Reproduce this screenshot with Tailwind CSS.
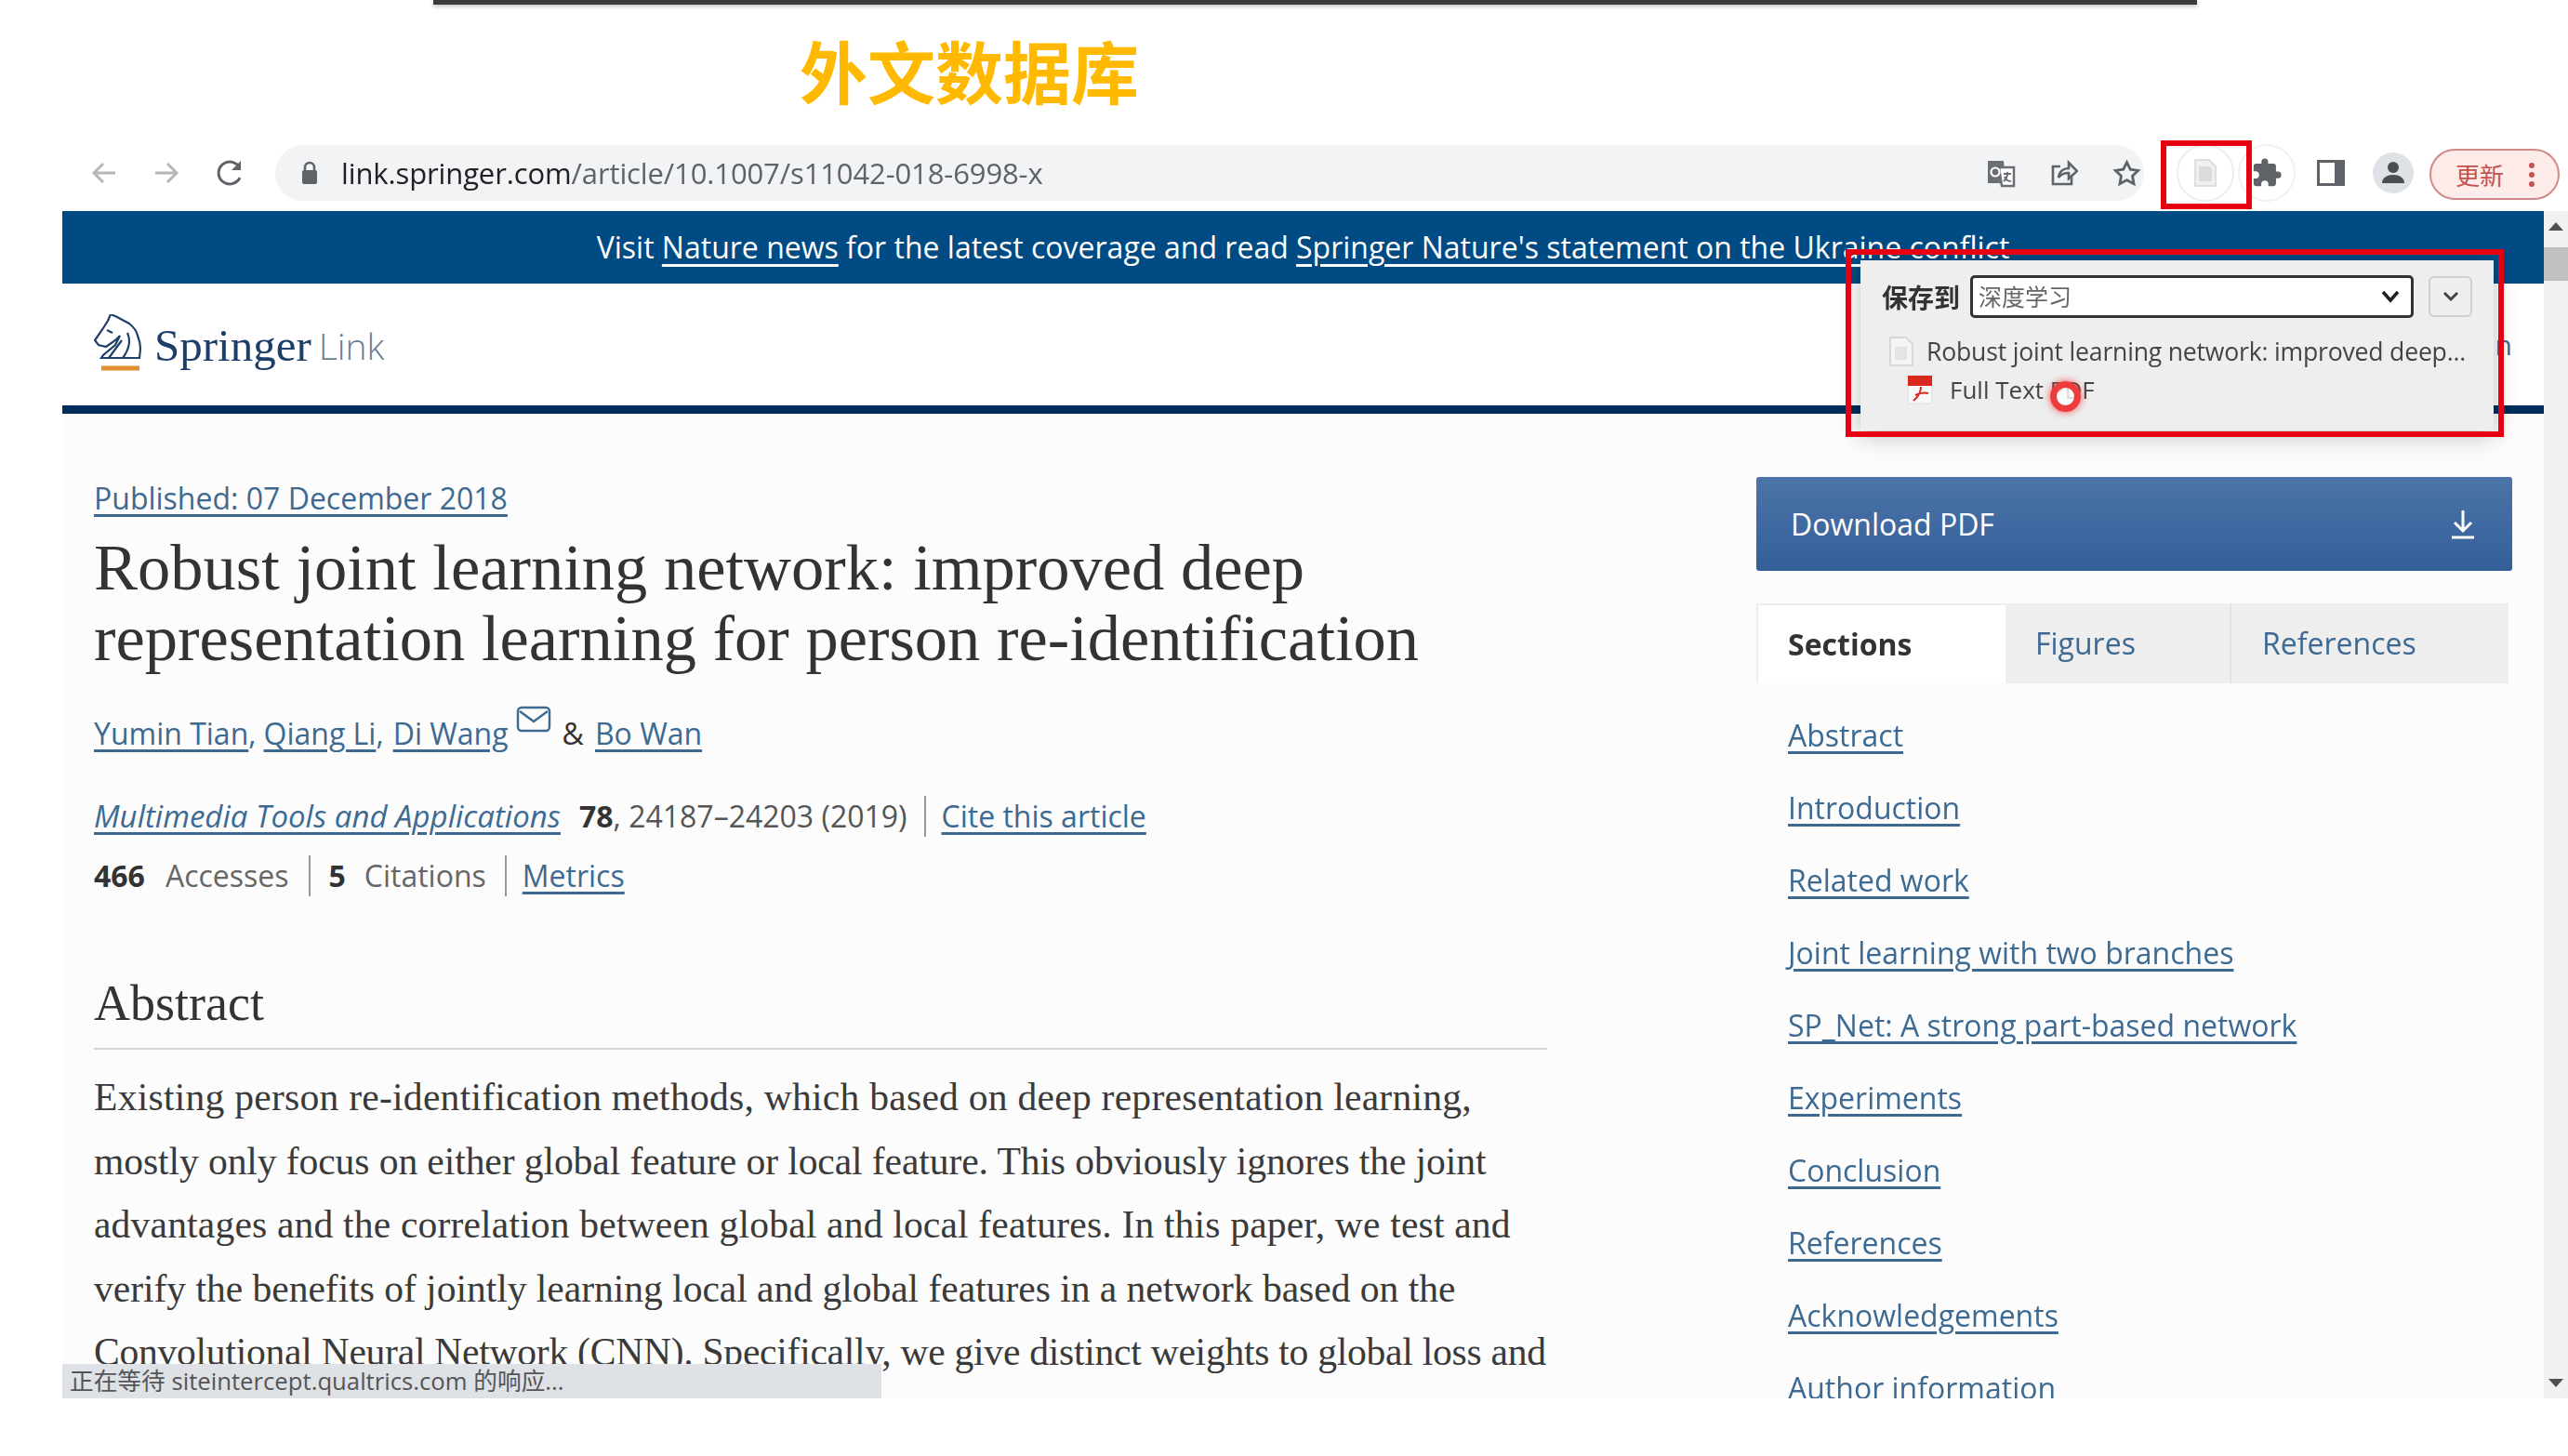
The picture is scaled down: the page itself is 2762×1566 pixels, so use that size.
<!DOCTYPE html>
<html lang="zh">
<head>
  <meta charset="UTF-8">
  <title>Robust joint learning network</title>
  <script src="https://cdn.jsdelivr.net/npm/@tailwindcss/browser@4"></script>
</head>
<body class="bg-white">
  <div class="relative w-[2762px] h-[1566px] overflow-hidden blur-[0.7px] font-['Open_Sans','Noto_Sans_CJK_SC',sans-serif] text-[#333]">
    <!-- video frame top edge -->
    <div class="ml-[466px] w-[1897px] h-[5px] bg-[#3a3a3a] shadow-[0_2px_4px_rgba(0,0,0,0.25)]"></div>
    <div class="h-[151px] pl-[860px] pt-[27px] text-[73px] leading-[84px] font-bold text-[#ffb900] font-['Noto_Sans_CJK_SC',sans-serif]">外文数据库</div>

    <!-- browser toolbar -->
    <div class="relative h-[71px] flex items-start">
      <div class="w-[296px] h-[60px] flex items-center pl-[98px] gap-[39px]">
        <svg class="w-[28px] h-[28px]" viewBox="0 0 28 28" fill="none" stroke="#b4b6b9" stroke-width="3"><path d="M26 14H3M13 4 3 14l10 10"/></svg>
        <svg class="w-[28px] h-[28px]" viewBox="0 0 28 28" fill="none" stroke="#b4b6b9" stroke-width="3"><path d="M2 14h23M15 4l10 10-10 10"/></svg>
        <svg class="w-[32px] h-[32px]" viewBox="0 0 32 32" fill="none" stroke="#5f6368" stroke-width="3"><path d="M26 21a12 12 0 1 1 0-10"/><path d="M27 3v10H17" fill="#5f6368" stroke="none"/></svg>
      </div>
      <div class="w-[2010px] h-[60px] rounded-full bg-[#f1f3f4] flex items-center pl-[27px]">
        <svg class="w-[20px] h-[26px]" viewBox="0 0 20 26"><path d="M5 11V7a5 5 0 0 1 10 0v4" fill="none" stroke="#5f6368" stroke-width="2.5"/><rect x="2" y="10" width="16" height="15" rx="2" fill="#5f6368"/></svg>
        <span class="ml-[24px] text-[31px] leading-none tracking-[-0.12px] text-[#202124]">link.springer.com<span class="text-[#5f6368]">/article/10.1007/s11042-018-6998-x</span></span>
        <div class="ml-auto flex items-center gap-[37px] pr-[3px]">
          <svg class="w-[32px] h-[32px]" viewBox="0 0 32 32"><path d="M2 3h17l2 24H2z" fill="#6b6e72"/><path d="M14 10h16v20H17z" fill="#fff" stroke="#6b6e72" stroke-width="2.5"/><circle cx="10" cy="15" r="4.5" fill="none" stroke="#fff" stroke-width="2.2"/><path d="M19 17h8M23 15v2c0 4-2 6-4 8M20 20c1 3 4 5 7 5" fill="none" stroke="#6b6e72" stroke-width="2"/></svg>
          <svg class="w-[30px] h-[30px]" viewBox="0 0 30 30" fill="none" stroke="#5f6368" stroke-width="2.6"><path d="M23 19v8H3V8h8"/><path d="M9 20c1-7 6-10 11-10V4l9 9-9 8v-6c-5 0-8 1-11 5z"/></svg>
          <svg class="w-[31px] h-[31px]" viewBox="0 0 24 24" fill="none" stroke="#5f6368" stroke-width="2.2"><path d="m12 2.8 2.9 5.9 6.5.9-4.7 4.6 1.1 6.5-5.8-3.1-5.8 3.1 1.1-6.5-4.7-4.6 6.5-.9z"/></svg>
        </div>
      </div>
      <div class="flex-1 flex items-center h-[60px] relative">
        <div class="absolute left-[101px] top-[-1px] w-[62px] h-[62px] rounded-full border-2 border-[#f0f0f0] flex items-center justify-center">
          <svg class="w-[34px] h-[34px]" viewBox="0 0 24 24" fill="#5f6368"><path d="M20.5 11H19V7a2 2 0 0 0-2-2h-4V3.5a2.5 2.5 0 0 0-5 0V5H4a2 2 0 0 0-2 2v3.8h1.5a2.7 2.7 0 0 1 0 5.4H2V20a2 2 0 0 0 2 2h3.8v-1.5a2.7 2.7 0 0 1 5.4 0V22H17a2 2 0 0 0 2-2v-4h1.5a2.5 2.5 0 0 0 0-5z"/></svg>
        </div>
        <div class="absolute left-[35px] top-[-1px] w-[62px] h-[62px] rounded-full border-2 border-[#eeeeee] bg-white flex items-center justify-center">
          <svg class="w-[24px] h-[30px]" viewBox="0 0 24 30"><path d="M1 1h15l7 7v21H1z" fill="#f0f0f0" stroke="#d5d5d5" stroke-width="1.5"/><path d="M5 8h11l3 3v13H5z" fill="#dcdcdc"/></svg>
        </div>
        <svg class="absolute left-[186px] top-[16px] w-[30px] h-[28px]" viewBox="0 0 30 28"><rect x="1.5" y="1.5" width="27" height="25" fill="#fff" stroke="#5f6368" stroke-width="3"/><rect x="19" y="1" width="10" height="26" fill="#5f6368"/></svg>
        <div class="absolute left-[246px] top-[8px] w-[44px] h-[44px] rounded-full bg-[#dee1e6] flex items-center justify-center">
          <svg class="w-[32px] h-[32px]" viewBox="0 0 32 32" fill="#4a4e55"><circle cx="16" cy="10" r="6"/><path d="M4 27c0-6 6-9 12-9s12 3 12 9z"/></svg>
        </div>
        <div class="absolute left-[307px] top-[4px] w-[140px] h-[55px] rounded-full border-2 border-[#d28a88] bg-[#fdecea] flex items-center text-[#c5524e] text-[26px] pl-[26px]">
          <span class="font-['Noto_Sans_CJK_SC',sans-serif]">更新</span>
          <span class="ml-[27px] flex flex-col gap-[4px]"><i class="block w-[6px] h-[6px] rounded-full bg-[#c5524e]"></i><i class="block w-[6px] h-[6px] rounded-full bg-[#c5524e]"></i><i class="block w-[6px] h-[6px] rounded-full bg-[#c5524e]"></i></span>
        </div>
      </div>
    </div>

    <!-- page viewport -->
    <div class="ml-[67px] w-[2695px] h-[1277px] flex overflow-hidden">
      <div class="w-[2669px] flex flex-col bg-[#fcfcfc]">
        <div class="h-[78px] shrink-0 bg-[#004b83] text-white text-[32px] flex items-center justify-center">
          <p>Visit <span class="underline underline-offset-[6px]">Nature news</span> for the latest coverage and read <span class="underline underline-offset-[6px]">Springer Nature's statement on the Ukraine conflict</span></p>
        </div>
        <div class="h-[131px] shrink-0 bg-white flex items-center justify-between px-[34px]">
          <div class="flex items-end">
            <svg class="w-[52px] h-[66px]" viewBox="0 0 52 66" fill="none" stroke="#1f4068" stroke-width="2.2">
              <path d="M1 28 10 15l5-8 3-7 7 3 13 7c5 4 8 8 9 13 2 5 3 9 3 14l-1 10H8l2-3 13-11 5-10-5 5-10 7-8-2z"/>
              <path d="M16 47 30 28M14 17l6 3M31 47c6-8 9-18 5-27"/>
              <path d="M8 58h41" stroke="#e08e2e" stroke-width="5"/>
            </svg>
            <span class="ml-[13px] mb-[2px] text-[49px] leading-[60px] text-[#1c3e68] font-['Liberation_Serif',serif]">Springer</span>
            <span class="ml-[8px] mb-[2px] text-[39px] leading-[60px] font-light text-[#6b7e92]">Link</span>
          </div>
          <span class="text-[#3d6a92] text-[30px]">Log in</span>
        </div>
        <div class="h-[9px] shrink-0 bg-[#002d5c]"></div>

        <div class="flex flex-1 min-h-0">
          <!-- article column -->
          <div class="ml-[34px] w-[1563px] shrink-0 pt-[69px]">
            <a class="block text-[32px] leading-[44px] text-[#3d6a92] underline underline-offset-[5px]">Published: 07 December 2018</a>
            <h1 class="mt-[14px] text-[70.5px] leading-[76px] whitespace-nowrap font-['Liberation_Serif',serif] text-[#333]">Robust joint learning network: improved deep<br>representation learning for person re-identification</h1>
            <div class="mt-[43px] text-[32px] leading-[44px] flex items-start">
              <span class="text-[#3d6a92] underline underline-offset-[5px]">Yumin Tian</span><span class="text-[#3d6a92]">,</span>
              <span class="ml-[8px] text-[#3d6a92] underline underline-offset-[5px]">Qiang Li</span><span class="text-[#3d6a92]">,</span>
              <span class="ml-[10px] text-[#3d6a92] underline underline-offset-[5px]">Di Wang</span>
              <svg class="ml-[8px] mt-[-8px] w-[38px] h-[30px]" viewBox="0 0 38 30" fill="none" stroke="#3d6a92" stroke-width="2.4"><rect x="2" y="2" width="34" height="25" rx="4"/><path d="m4 6 15 11L34 6"/></svg>
              <span class="ml-[12px]">&amp;</span>
              <span class="ml-[12px] text-[#3d6a92] underline underline-offset-[5px]">Bo Wan</span>
            </div>
            <div class="mt-[45px] text-[32px] leading-[44px] flex items-center">
              <span class="italic text-[33px] text-[#3d6a92] underline underline-offset-[5px]">Multimedia Tools and Applications</span>
              <span class="ml-[20px] font-bold">78</span><span class="text-[#555]">, 24187–24203 (2019)</span>
              <span class="ml-[18px] pl-[17px] border-l-2 border-[#999] text-[#3d6a92]"><span class="underline underline-offset-[5px]">Cite this article</span></span>
            </div>
            <div class="mt-[20px] text-[32px] leading-[44px] flex items-center">
              <span class="font-bold">466</span><span class="ml-[22px] text-[#666]">Accesses</span>
              <span class="ml-[22px] pl-[19px] border-l-2 border-[#999] font-bold">5</span><span class="ml-[20px] text-[#666]">Citations</span>
              <span class="ml-[20px] pl-[17px] border-l-2 border-[#999] text-[#3d6a92]"><span class="underline underline-offset-[5px]">Metrics</span></span>
            </div>
            <h2 class="mt-[85px] pb-[18px] border-b-2 border-[#d5d5d5] text-[54px] leading-[60px] font-['Liberation_Serif',serif]">Abstract</h2>
            <div class="mt-[17px] text-[41.6px] leading-[68.5px] whitespace-nowrap font-['Liberation_Serif',serif] text-[#3a3a3a]">
              <p class="tracking-[0.24px]">Existing person re-identification methods, which based on deep representation learning,</p>
              <p class="tracking-[-0.1px]">mostly only focus on either global feature or local feature. This obviously ignores the joint</p>
              <p class="tracking-[0.16px]">advantages and the correlation between global and local features. In this paper, we test and</p>
              <p class="tracking-[-0.04px]">verify the benefits of jointly learning local and global features in a network based on the</p>
              <p class="tracking-[-0.27px]">Convolutional Neural Network (CNN). Specifically, we give distinct weights to global loss and</p>
            </div>
          </div>

          <!-- sidebar column -->
          <div class="ml-[225px] w-[813px] shrink-0 pt-[68px]">
            <div class="h-[101px] rounded-[3px] bg-gradient-to-b from-[#4c74a8] to-[#335f99] text-white text-[32px] flex items-center justify-between pl-[37px] pr-[40px]">
              <span>Download PDF</span>
              <svg class="w-[26px] h-[32px]" viewBox="0 0 26 32" fill="none" stroke="#fff" stroke-width="3"><path d="M13 1v21M4 14l9 9 9-9M1 30h24"/></svg>
            </div>
            <div class="mt-[35px] h-[86px] flex text-[32px] text-[#3d6a92]">
              <div class="w-[268px] bg-white border-t-2 border-l-2 border-[#eeeeee] flex items-center pl-[32px] font-bold text-[#333]">Sections</div>
              <div class="w-[243px] bg-[#eeeeee] border-r-2 border-[#e2e2e2] flex items-center pl-[32px]">Figures</div>
              <div class="w-[298px] bg-[#eeeeee] flex items-center pl-[33px]">References</div>
            </div>
            <ul class="mt-[17px] pl-[34px] text-[#3d6a92] text-[32px]">
              <li class="h-[78px] flex items-center"><a class="underline underline-offset-[5px]">Abstract</a></li>
              <li class="h-[78px] flex items-center"><a class="underline underline-offset-[5px]">Introduction</a></li>
              <li class="h-[78px] flex items-center"><a class="underline underline-offset-[5px]">Related work</a></li>
              <li class="h-[78px] flex items-center"><a class="underline underline-offset-[5px]">Joint learning with two branches</a></li>
              <li class="h-[78px] flex items-center"><a class="underline underline-offset-[5px]">SP_Net: A strong part-based network</a></li>
              <li class="h-[78px] flex items-center"><a class="underline underline-offset-[5px]">Experiments</a></li>
              <li class="h-[78px] flex items-center"><a class="underline underline-offset-[5px]">Conclusion</a></li>
              <li class="h-[78px] flex items-center"><a class="underline underline-offset-[5px]">References</a></li>
              <li class="h-[78px] flex items-center"><a class="underline underline-offset-[5px]">Acknowledgements</a></li>
              <li class="h-[78px] flex items-center"><a class="underline underline-offset-[5px]">Author information</a></li>
            </ul>
          </div>
        </div>
      </div>

      <!-- scrollbar -->
      <div class="w-[26px] bg-[#f1f1f1] flex flex-col items-center justify-between py-[12px] ">
        <div class="flex flex-col items-center w-full">
          <div class="w-0 h-0 border-x-[8px] border-x-transparent border-b-[9px] border-b-[#505050]"></div>
          <div class="mt-[18px] w-full h-[36px] bg-[#c1c1c1]"></div>
        </div>
        <div class="w-0 h-0 border-x-[8px] border-x-transparent border-t-[9px] border-t-[#505050]"></div>
      </div>
    </div>

    <!-- status bubble -->
    <div class="absolute left-[67px] top-[1467px] w-[881px] h-[37px] bg-[#dee1e6] text-[#555] text-[25.7px] leading-[37px] pl-[8px] whitespace-nowrap font-['Open_Sans','Noto_Sans_CJK_SC',sans-serif]">正在等待 siteintercept.qualtrics.com 的响应...</div>

    <!-- extension popup -->
    <div class="absolute left-[2001px] top-[280px] w-[681px] h-[183px] bg-[#eeeeee] shadow-[0_6px_24px_rgba(0,0,0,0.25)] text-[#444]">
      <div class="flex items-center pl-[23px] pt-[16px]">
        <span class="text-[28px] font-bold text-[#333] font-['Noto_Sans_CJK_SC',sans-serif]">保存到</span>
        <div class="ml-[11px] w-[477px] h-[46px] rounded-[5px] bg-white border-[3px] border-[#333] flex items-center justify-between pl-[6px] pr-[12px] text-[25px] text-[#666] font-['Noto_Sans_CJK_SC',sans-serif]">
          <span>深度学习</span>
          <svg class="w-[20px] h-[14px]" viewBox="0 0 20 14" fill="none" stroke="#222" stroke-width="3.5"><path d="m2 2 8 9 8-9"/></svg>
        </div>
        <div class="ml-[16px] w-[47px] h-[44px] rounded-[6px] border-2 border-[#cfcfcf] flex items-center justify-center">
          <svg class="w-[18px] h-[12px]" viewBox="0 0 18 12" fill="none" stroke="#444" stroke-width="3"><path d="m2 2 7 7 7-7"/></svg>
        </div>
      </div>
      <div class="flex items-center mt-[18px] pl-[30px]">
        <svg class="w-[28px] h-[32px]" viewBox="0 0 28 32"><path d="M2 1h17l7 7v23H2z" fill="#f5f5f5" stroke="#d8d8d8" stroke-width="2"/><path d="M7 11h13v14H7z" fill="#e4e4e4"/></svg>
        <span class="ml-[13px] text-[26.6px] leading-[36px] tracking-[-0.2px] whitespace-nowrap">Robust joint learning network: improved deep...</span>
      </div>
      <div class="flex items-center mt-[5px] pl-[50px]">
        <svg class="w-[28px] h-[32px]" viewBox="0 0 28 32"><path d="M1 1h26v30H1z" fill="#f7f7f7" stroke="#ddd"/><path d="M1 1h26v11H1z" fill="#d9281e"/><path d="M7 28c5-4 8-10 8-15M9 22c4-2 9-3 14-2" fill="none" stroke="#d9281e" stroke-width="2"/></svg>
        <span class="ml-[18px] text-[26px] leading-[36px] whitespace-nowrap">Full Text PDF</span>
      </div>
    </div>
    <!-- click marker -->
    <div class="absolute left-[2205px] top-[410px] w-[33px] h-[33px] rounded-full border-[7px] border-[#ee3c3c] bg-white/80 shadow-[0_0_8px_rgba(238,40,40,0.8)]"></div>

    <!-- red highlight boxes -->
    <div class="absolute left-[1985px] top-[268px] w-[708px] h-[202px] border-[6px] border-[#e60012]"></div>
    <div class="absolute left-[2324px] top-[151px] w-[98px] h-[74px] border-[6px] border-[#e60012]"></div>
  </div>
</body>
</html>
